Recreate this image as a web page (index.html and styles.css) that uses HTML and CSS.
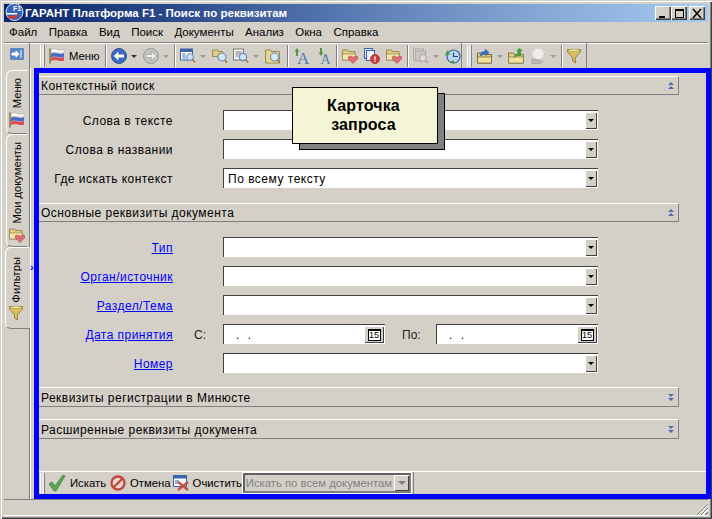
FILE: index.html
```html
<!DOCTYPE html>
<html lang="ru">
<head>
<meta charset="utf-8">
<title>ГАРАНТ Платформа F1 - Поиск по реквизитам</title>
<link rel="stylesheet" href="styles.css">
</head>
<body>
<svg class="defs" width="0" height="0">
  <symbol id="flag" viewBox="0 0 16 16"><path d="M1 .5v15" stroke="#8a7a40" stroke-width="1.600"/><path d="M2 1.500q4-1.500 7 0t6-.5v4q-3 1-6 0t-7 0z" fill="#f6f6f6" stroke="#a0a094" stroke-width=".5"/><path d="M2 5.500q4-1 7 0t6-.5v4q-3 1-6 0t-7 0z" fill="#4a6cc8"/><path d="M2 9.500q4-1 7 0t6-.5v3.500q-3 1-6 0t-7 .5z" fill="#dc4a50"/></symbol>
  <symbol id="back" viewBox="0 0 16 16"><circle cx="8" cy="8" r="7.500" fill="#3a6ac4" stroke="#1f3f80" stroke-width=".8"/><path d="M2.800 8l4.600-4.600v3h5.600v3.200H7.400v3z" fill="#fff"/></symbol>
  <symbol id="forward" viewBox="0 0 16 16"><circle cx="8" cy="8" r="7.500" fill="#c4c4c0" stroke="#8c8c88" stroke-width=".8"/><path d="M13 8L8.600 3.400v3H3v3.200h5.600v3z" fill="#eeeeec" stroke="#8c8c88" stroke-width=".5"/></symbol>
  <symbol id="docmag" viewBox="0 0 16 16"><rect x=".5" y="1" width="12" height="11" fill="#fff" stroke="#3a62ad"/><rect x=".5" y="1" width="12" height="3" fill="#3a62ad"/><path d="M2.500 6h3M2.500 8h3M2.500 10h3" stroke="#3a62ad"/><circle cx="10" cy="9" r="3.400" fill="#cfe3f5" stroke="#5f86b5"/><path d="M12.500 11.500l2.500 3" stroke="#9a7d3c" stroke-width="1.600"/></symbol>
  <symbol id="foldermag" viewBox="0 0 16 16"><path d="M.5 2h5l1 1.500h4v5H.5z" fill="#e0cd82" stroke="#8a7a40" stroke-width=".8"/><circle cx="10" cy="9" r="4" fill="#d5e6f5" stroke="#6d8eb3" stroke-width="1.200"/><path d="M13 12l2 3" stroke="#9a7d3c" stroke-width="1.600"/></symbol>
  <symbol id="papermag" viewBox="0 0 16 16"><rect x=".5" y="1" width="10" height="11" fill="#f4f4f0" stroke="#777"/><path d="M2.500 4h6M2.500 6h5M2.500 8h3" stroke="#777"/><circle cx="10" cy="9" r="3.600" fill="#cfe3f5" stroke="#5f86b5" stroke-width="1.100"/><path d="M12.500 11.500l2.500 3" stroke="#9a7d3c" stroke-width="1.600"/></symbol>
  <symbol id="folderdocmag" viewBox="0 0 16 16"><path d="M.5 2h5l1 1.500h8V15H.5z" fill="#e7d58f" stroke="#8a7a40" stroke-width=".8"/><circle cx="9.500" cy="9" r="4" fill="#d5e6f5" stroke="#6d8eb3" stroke-width="1.100"/><path d="M12.500 12l2.500 3" stroke="#9a7d3c" stroke-width="1.400"/></symbol>
  <symbol id="folderheart" viewBox="0 0 16 16"><path d="M.5 2h5l1 1.500h6.500v8.500H.5z" fill="#e0cd82" stroke="#8a7a40" stroke-width=".8"/><path d="M.5 6h13v6H.5z" fill="#f2e6ac" stroke="#8a7a40" stroke-width=".6"/><path d="M11 15.500L6.500 11Q5.500 8 8 8q2 0 3 1.500Q12 8 14 8q2.500 0 1.500 3z" fill="#df6a72" stroke="#b34650" stroke-width=".6"/></symbol>
  <symbol id="docalert" viewBox="0 0 16 16"><rect x=".5" y=".5" width="8" height="10" fill="#dbe6f7" stroke="#3a62ad"/><rect x="2.500" y="2.500" width="8" height="10" fill="#eef3fb" stroke="#3a62ad"/><circle cx="11" cy="11" r="4.500" fill="#d43c3c" stroke="#8e2020" stroke-width=".7"/><path d="M11 8.500v3M11 12.500v1.200" stroke="#fff" stroke-width="1.400"/></symbol>
  <symbol id="docgray" viewBox="0 0 16 16"><rect x=".5" y="1" width="10" height="11" fill="#d8d8d4" stroke="#a8a8a4"/><rect x="2.500" y="3" width="10" height="10" fill="#c8c8c4" stroke="#a8a8a4"/><circle cx="10" cy="10" r="3.400" fill="#dededa" stroke="#a8a8a4"/><path d="M12.500 12.500l2.500 2.500" stroke="#a8a8a4" stroke-width="1.600"/></symbol>
  <symbol id="clock" viewBox="0 0 16 16"><circle cx="8.500" cy="8.500" r="6.500" fill="#bcd6f0" stroke="#33629f" stroke-width="1.200"/><path d="M8.500 4.500v4H13" fill="none" stroke="#1f4a80" stroke-width="1.200"/><path d="M0 7.500l2.500-5.500 2.500 4.500z" fill="#3f9a40"/><path d="M5 14l4-2v4z" fill="#3f9a40"/></symbol>
  <symbol id="folderarrow" viewBox="0 0 16 16"><path d="M.5 5h5l1 1.500h8V15H.5z" fill="#dfcb7c" stroke="#5c5230" stroke-width=".8"/><path d="M.5 9h14v6H.5z" fill="#f0e29a" stroke="#5c5230" stroke-width=".6"/><path d="M3 8q0-5 5-5V.5l4.500 4L8 8V6Q5 6 5 8z" fill="#3a6cb8"/></symbol>
  <symbol id="folderup" viewBox="0 0 16 16"><path d="M.5 5h5l1 1.500h9V15H.5z" fill="#dfcb7c" stroke="#6c6236" stroke-width=".8"/><path d="M.5 9h15v6H.5z" fill="#f0e29a" stroke="#6c6236" stroke-width=".6"/><path d="M6 10q0-4 3.500-4.500V3H8l3.500-3L15 3h-2v5H10q-2 0-4 2z" fill="#4f9a40"/></symbol>
  <symbol id="bulb" viewBox="0 0 16 16"><circle cx="8" cy="6" r="5.500" fill="#ececec"/><path d="M2 11h4l1 1h3v4H2z" fill="#b8b8b4" stroke="#9a9a96" stroke-width=".7"/><path d="M11 12l3 2-3 2z" fill="#b8b8b4"/></symbol>
  <symbol id="funnel" viewBox="0 0 14 16"><path d="M.5 1.500h13v2.500L8.500 9.500V15L5.500 13V9.500L.5 4z" fill="#d8bf5a" stroke="#8a7430" stroke-width=".8"/><ellipse cx="7" cy="2.300" rx="6" ry="1.200" fill="#f1e6a8" stroke="#8a7430" stroke-width=".4"/></symbol>
  <symbol id="check" viewBox="0 0 18 18"><path d="M1 10l3-2 3 4L15 1l2 1L8 17H6z" fill="#5ca552" stroke="#3c7a38" stroke-width=".7"/></symbol>
  <symbol id="stop" viewBox="0 0 16 16"><circle cx="8" cy="8" r="6.500" fill="#f0d8d4" stroke="#bf4a40" stroke-width="2.400"/><path d="M3.500 12.500l9-9" stroke="#bf4a40" stroke-width="2.400"/></symbol>
  <symbol id="clear" viewBox="0 0 16 16"><rect x=".5" y=".5" width="13" height="11" fill="#fff" stroke="#3a62ad"/><rect x=".5" y=".5" width="13" height="3" fill="#3a62ad"/><path d="M2 6h4M2 8h3" stroke="#3a62ad"/><path d="M5 7l10 8M15 7L5 15" stroke="#c8504a" stroke-width="2.400"/></symbol>
  <symbol id="dock" viewBox="0 0 14 12"><rect width="14" height="12" rx="1" fill="#5b86c8"/><path d="M2 5h4V3l3 3-3 3V7H2zM11 2v8" stroke="#fff" fill="#fff"/></symbol>
</svg>

<div class="window">
  <header class="titlebar">
    <svg class="logo" viewBox="0 0 19 18"><circle cx="9.500" cy="9" r="8.500" fill="#3a64b4" stroke="#dfe7f5"/><text x="8" y="8" class="icon-f1">F1</text><path d="M2 10h10v1.500H2z" fill="#fff"/><path d="M2 12.500q4 1.500 11-1v2q-5 3-9 2z" fill="#d03c3c"/></svg>
    <span class="title-text">ГАРАНТ Платформа F1 - Поиск по реквизитам</span>
    <div class="caption-buttons">
      <span class="cap-btn"><i class="cap-min"></i></span>
      <span class="cap-btn"><i class="cap-max"></i></span>
      <span class="cap-btn cap-close">
        <svg width="10" height="9" viewBox="0 0 10 9"><path d="M1 0l8 9M9 0L1 9" stroke="#000" stroke-width="1.600"/></svg>
      </span>
    </div>
  </header>

  <nav class="menubar">
    <span>Файл</span><span>Правка</span><span>Вид</span><span>Поиск</span><span>Документы</span><span>Анализ</span><span>Окна</span><span>Справка</span>
  </nav>

  <div class="toolbar-row">
    <div class="dock-cell"><svg class="dock-icon"><use href="#dock"/></svg></div>
    <div class="tb-group tb-main">
      <i class="grip"></i>
      <svg class="ic first"><use href="#flag"/></svg><span class="tb-label">Меню</span>
      <i class="sep"></i>
      <svg class="ic"><use href="#back"/></svg><i class="drop"></i>
      <svg class="ic gap-s"><use href="#forward"/></svg><i class="drop off"></i>
      <i class="sep"></i>
      <svg class="ic"><use href="#docmag"/></svg><i class="drop off"></i>
      <svg class="ic gap-s"><use href="#foldermag"/></svg>
      <svg class="ic gap-m"><use href="#papermag"/></svg><i class="drop off"></i>
      <svg class="ic gap-s"><use href="#folderdocmag"/></svg>
      <i class="sep sep-wide"></i>
      <svg class="ic" viewBox="0 0 16 16"><text x="3" y="15.500" class="icon-a-big">A</text><path d="M3 0L.5 3.500H2V8h2V3.500h1.500z" fill="#4f9a4a"/></svg>
      <svg class="ic-a" viewBox="0 0 13 16"><text x="2.500" y="15.500" class="icon-a-small">A</text><path d="M3 8L.5 4.500H2V0h2v4.500h1.500z" fill="#4f9a4a"/></svg>
      <i class="sep"></i>
      <svg class="ic"><use href="#folderheart"/></svg>
      <svg class="ic gap-s"><use href="#docalert"/></svg>
      <svg class="ic gap-s"><use href="#folderheart"/></svg>
      <i class="sep"></i>
      <svg class="ic"><use href="#docgray"/></svg><i class="drop off"></i>
      <svg class="ic gap-s"><use href="#clock"/></svg>
    </div>
    <div class="tb-group tb-second">
      <i class="grip"></i>
      <svg class="ic first2"><use href="#folderarrow"/></svg><i class="drop off"></i>
      <svg class="ic gap-m"><use href="#folderup"/></svg>
      <svg class="ic gap-s"><use href="#bulb"/></svg><i class="drop off"></i>
      <i class="sep"></i>
      <svg class="ic-f"><use href="#funnel"/></svg>
    </div>
  </div>

  <div class="workspace">
    <aside class="sidebar">
      <div class="tab tab-menu"><span class="tab-text">Меню</span><svg class="tab-ic"><use href="#flag"/></svg></div>
      <div class="tab tab-docs"><span class="tab-text">Мои документы</span><svg class="tab-ic"><use href="#folderheart"/></svg></div>
      <div class="tab tab-filters"><span class="tab-text">Фильтры</span><svg class="tab-ic"><use href="#funnel"/></svg></div>
    </aside>
    <div class="splitter"><span class="split-arrow">›</span></div>

    <main class="frame">
      <div class="sec-head"><span>Контекстный поиск</span><i class="chev up"></i></div>
      <section class="form">
        <div class="row"><label class="lbl">Слова в тексте</label><div class="field"><span class="val"></span><i class="ddbtn"></i></div></div>
        <div class="row"><label class="lbl">Слова в названии</label><div class="field"><span class="val"></span><i class="ddbtn"></i></div></div>
        <div class="row"><label class="lbl">Где искать контекст</label><div class="field"><span class="val">По всему тексту</span><i class="ddbtn"></i></div></div>
      </section>

      <div class="sec-head"><span>Основные реквизиты документа</span><i class="chev up"></i></div>
      <section class="form">
        <div class="row"><a class="lbl link">Тип</a><div class="field"><span class="val"></span><i class="ddbtn"></i></div></div>
        <div class="row"><a class="lbl link">Орган/источник</a><div class="field"><span class="val"></span><i class="ddbtn"></i></div></div>
        <div class="row"><a class="lbl link">Раздел/Тема</a><div class="field"><span class="val"></span><i class="ddbtn"></i></div></div>
        <div class="row">
          <a class="lbl link">Дата принятия</a>
          <span class="from-lbl">С:</span>
          <div class="field date"><span class="val date-val">. .</span><i class="calbtn"><b>15</b></i></div>
          <span class="to-lbl">По:</span>
          <div class="field date"><span class="val date-val">. .</span><i class="calbtn"><b>15</b></i></div>
        </div>
        <div class="row"><a class="lbl link">Номер</a><div class="field"><span class="val"></span><i class="ddbtn"></i></div></div>
      </section>

      <div class="sec-head closed"><span>Реквизиты регистрации в Минюсте</span><i class="chev down"></i></div>
      <div class="sec-head closed last"><span>Расширенные реквизиты документа</span><i class="chev down"></i></div>

      <div class="bottom-bar">
        <div class="bb-group">
          <i class="grip"></i>
          <svg class="bb-check"><use href="#check"/></svg><span class="bb-label">Искать</span>
          <svg class="bb-ic"><use href="#stop"/></svg><span class="bb-label">Отмена</span>
          <svg class="bb-ic bb-clear"><use href="#clear"/></svg><span class="bb-label">Очистить</span>
          <div class="combo"><span>Искать по всем документам</span><i class="combo-btn"></i></div>
        </div>
      </div>

      <div class="callout">Карточка<br>запроса</div>
    </main>
  </div>

  <footer class="statusbar"><i class="resize"></i></footer>
</div>
</body>
</html>
```
FILE: styles.css
```css
* { box-sizing: border-box; }
html, body { margin: 0; padding: 0; }
body {
  width: 712px; height: 519px; overflow: hidden;
  font: 12px "Liberation Sans", Arial, sans-serif;
  color: #000; background: #d4d0c8;
}
.defs { position: absolute; }
i { display: block; font-style: normal; flex: none; }
svg { display: block; flex: none; overflow: visible; }
.icon-a-big { font: 17px "Liberation Serif", serif; fill: #4d7fb8; }
.icon-a-small { font: 14px "Liberation Serif", serif; fill: #4d7fb8; }
.icon-f1 { font: bold 7px "Liberation Sans", sans-serif; fill: #fff; }

.window {
  width: 712px; height: 519px;
  display: flex; flex-direction: column;
  padding: 4px;
  background: #d4d0c8;
  box-shadow: inset 1px 1px 0 #d4d0c8, inset 2px 2px 0 #fff, inset -1px -1px 0 #404040, inset -2px -2px 0 #808080;
}

/* title */
.titlebar {
  height: 18px; flex: none;
  display: flex; align-items: center;
  background: linear-gradient(90deg, #0a246a 0%, #2c4b8c 25%, #5a7cb4 50%, #84a6d4 75%, #a6caf0 100%);
  color: #fff; font-weight: bold; font-size: 11.500px;
  position: relative;
}
.logo { width: 19px; height: 18px; margin: -2px 1px 0 1px; }
.title-text { white-space: nowrap; }
.caption-buttons { margin-left: auto; display: flex; padding-right: 3px; }
.cap-btn {
  width: 16px; height: 14px; background: #d4d0c8;
  box-shadow: inset 1px 1px 0 #fff, inset -1px -1px 0 #404040, inset -2px -2px 0 #808080;
  display: flex; align-items: center; justify-content: center; position: relative;
}
.cap-close { margin-left: 2px; }
.cap-min { width: 6px; height: 2px; background: #000; margin: 7px 3px 0 0; }
.cap-max { width: 9px; height: 9px; border: 1px solid #000; border-top-width: 2px; }

/* menu */
.menubar {
  height: 20px; flex: none;
  display: flex; align-items: center; gap: 11.400px;
  padding-left: 5px;
  font-size: 11.500px;
}

/* toolbar */
.toolbar-row {
  height: 26px; flex: none;
  display: flex;
  border-top: 1px solid #808080;
  box-shadow: inset 0 1px 0 #fff;
}
.dock-cell { width: 26px; display: flex; justify-content: flex-start; padding: 5px 0 0 6px; border-right: 1px solid #808080; }
.dock-icon { width: 14px; height: 12px; }
.tb-group {
  display: flex; align-items: center;
  height: 25px; padding-top: 1px;
  border-right: 1px solid #808080;
}
.tb-main { padding-left: 10px; width: 432px; }
.tb-second { padding-left: 5px; width: 125px; }
.grip { width: 5px; height: 22px; border-left: 1px solid #fff; border-right: 1px solid #808080; box-shadow: inset 1px 0 0 #d4d0c8; background: #ececec; }
.ic { width: 16px; height: 16px; }
.first { margin-left: 4px; }
.first2 { margin-left: 5px; }
.gap-s { margin-left: 6px; }
.gap-m { margin-left: 5px; }
.ic-a { width: 13px; height: 16px; margin-left: 8px; }
.ic-f { width: 14px; height: 16px; }
.tb-label { margin-left: 4px; font-size: 11.300px; }
.sep { width: 2px; height: 22px; margin: 0 4px 0 5px; border-left: 1px solid #808080; border-right: 1px solid #fff; }
.sep-wide { margin: 0 5px 0 6px; }
.drop {
  width: 0; height: 0; margin-left: 4px;
  border-left: 3px solid transparent; border-right: 3px solid transparent; border-top: 3px solid #333;
}
.drop.off { border-top-color: #999; }

/* workspace */
.workspace {
  flex: 1; display: flex; min-height: 0;
  margin-right: -3px;
}
.sidebar {
  width: 26px; flex: none;
  border-right: 1px solid #808080;
  box-shadow: 1px 0 0 #fff;
  padding: 2px 0 0 2px;
  display: flex; flex-direction: column;
}
.tab {
  display: flex; flex-direction: column; align-items: center;
  width: 21px;
  border: 1px solid #fff; border-right: 0;
  border-radius: 6px 0 0 6px;
  border-bottom-color: #808080;
  margin-right: -1px;
}
.tab-text {
  writing-mode: vertical-rl; transform: rotate(180deg);
  font-size: 11.200px; white-space: nowrap; line-height: 14px;
}
.tab-ic { width: 16px; height: 16px; margin-top: auto; }
.tab-menu { height: 64px; padding: 7px 0 5px; }
.tab-docs { height: 113px; padding: 7px 0 3px; }
.tab-filters {
  height: 82px; padding: 9px 4px 7px 0; margin-left: -1px; width: 25px;
  background: #d4d0c8; position: relative;
}
.tab-filters .tab-ic { width: 14px; }
.splitter { width: 4px; flex: none; position: relative; }
.split-arrow { position: absolute; left: 0; top: 194px; color: #00f; font-size: 11px; font-weight: bold; line-height: 11px; }

/* frame */
.frame {
  flex: 1; min-width: 0;
  position: relative;
  display: flex; flex-direction: column;
  border: 5px solid #00f;
  padding-top: 3px;
  padding-right: 27px;
}
.sec-head {
  height: 19px; flex: none;
  display: flex; align-items: center; justify-content: space-between;
  padding: 0 4px 0 2px;
  border-top: 1px solid #fff;
  border-right: 1px solid #808080;
  border-bottom: 1px solid #808080;
  background: #d4d0c8;
  font-size: 12px;
  letter-spacing: .47px;
}
.sec-head.closed { height: 20px; padding-top: 1px; }
.sec-head.last { margin-top: 12px; }
.chev { width: 6px; height: 7px; position: relative; }
.chev::before, .chev::after {
  content: ""; position: absolute; left: 0; width: 0; height: 0;
  border-left: 3px solid transparent; border-right: 3px solid transparent;
}
.chev.up::before { top: 0; border-bottom: 3px solid #4a6fb0; }
.chev.up::after { top: 4px; border-bottom: 3px solid #4a6fb0; }
.chev.down::before { top: 0; border-top: 3px solid #4a6fb0; }
.chev.down::after { top: 4px; border-top: 3px solid #4a6fb0; }

.form { display: flex; flex-direction: column; gap: 9px; padding: 15px 0; }
.form + .sec-head.closed { margin-top: -1px; }
.row { display: flex; align-items: center; height: 20px; }
.lbl { width: 134px; flex: none; text-align: right; margin-right: 50px; padding-top: 1px; font-size: 12px; letter-spacing: .46px; white-space: nowrap; }
.link { color: #00f; text-decoration: underline; }
.field {
  width: 375px; height: 20px; flex: none;
  display: flex; align-items: center; justify-content: space-between;
  background: #fff;
  border-top: 1px solid #404040; border-left: 1px solid #404040;
  padding: 0 0 0 4px;
  letter-spacing: .5px;
}
.val { white-space: pre; }
.ddbtn {
  width: 12px; height: 17px; margin-right: 1px; position: relative;
  background: #d4d0c8;
  box-shadow: inset 1px 1px 0 #fff, inset -1px -1px 0 #404040;
}
.ddbtn::after {
  content: ""; position: absolute; left: 3px; top: 7px;
  border-left: 3px solid transparent; border-right: 3px solid transparent; border-top: 3px solid #000;
}
.lbl:has(+ .from-lbl) { margin-right: 0; }
.from-lbl { width: 50px; padding: 1px 0 0 21px; flex: none; color: #222; }
.to-lbl { width: 51px; padding: 1px 0 0 17px; flex: none; color: #222; }
.field.date { width: 162px; }
.date-val { padding-left: 8px; word-spacing: 4px; }
.calbtn {
  width: 20px; height: 17px; margin-right: 1px;
  background: #d4d0c8;
  box-shadow: inset 1px 1px 0 #fff, inset -1px -1px 0 #404040;
  display: flex; align-items: center; justify-content: center;
}
.calbtn b {
  display: block; width: 13px; height: 12px;
  background: #fff; border: 1px solid #000; border-top-width: 2px;
  font: normal 9px/9px "Liberation Sans", sans-serif; text-align: center; letter-spacing: 0;
}

/* bottom bar */
.bottom-bar {
  margin: auto -27px 0 0;
  height: 23px; flex: none;
  border-top: 1px solid #fff;
  display: flex;
}
.bb-group {
  display: flex; align-items: center;
  width: 375px; height: 22px;
  padding-left: 1px;
  border-right: 1px solid #808080;
}
.bb-group .grip { height: 21px; }
.bb-check { width: 18px; height: 18px; margin-left: 3px; }
.bb-ic { width: 16px; height: 16px; margin-left: 4px; }
.bb-clear { margin-left: 2px; }
.bb-label { margin-left: 4px; font-size: 11.300px; white-space: nowrap; }
.combo {
  width: 168px; height: 20px; margin-left: 1px; flex: none;
  border: 2px solid #606060; border-right-color: #808080; border-bottom-color: #808080;
  outline: 1px solid #fff; outline-offset: 0;
  display: flex; align-items: center; justify-content: space-between;
  padding-left: 1px; color: #808080; font-size: 11.300px; white-space: nowrap;
}
.combo-btn {
  width: 15px; height: 16px; position: relative;
  box-shadow: inset 1px 1px 0 #fff, inset -1px -1px 0 #404040;
}
.combo-btn::after {
  content: ""; position: absolute; left: 4px; top: 6px;
  border-left: 4px solid transparent; border-right: 4px solid transparent; border-top: 4px solid #808080;
}

/* callout */
.callout {
  position: absolute; left: 253px; top: 14px;
  width: 146px; height: 57px;
  background: #f5f5d8;
  border: 1px solid #000;
  box-shadow: 7px 6px 0 -1px #808080, 7px 6px 0 0 #000;
  text-align: center;
  font: bold 16px/19px "Liberation Sans", Arial, sans-serif;
  letter-spacing: .15px;
  padding: 8px 3px 0 0;
}

/* status */
.statusbar {
  height: 17px; flex: none; position: relative;
  border-top: 1px solid #808080;
  border-bottom: 1px solid #fff;
  margin-bottom: -1px;
}
.resize {
  position: absolute; right: 0; bottom: 0; width: 13px; height: 13px;
  background: repeating-linear-gradient(135deg, transparent 0 1px, #808080 1px 2px, #fff 2px 3px);
  clip-path: polygon(100% 0, 100% 100%, 0 100%);
}
```
